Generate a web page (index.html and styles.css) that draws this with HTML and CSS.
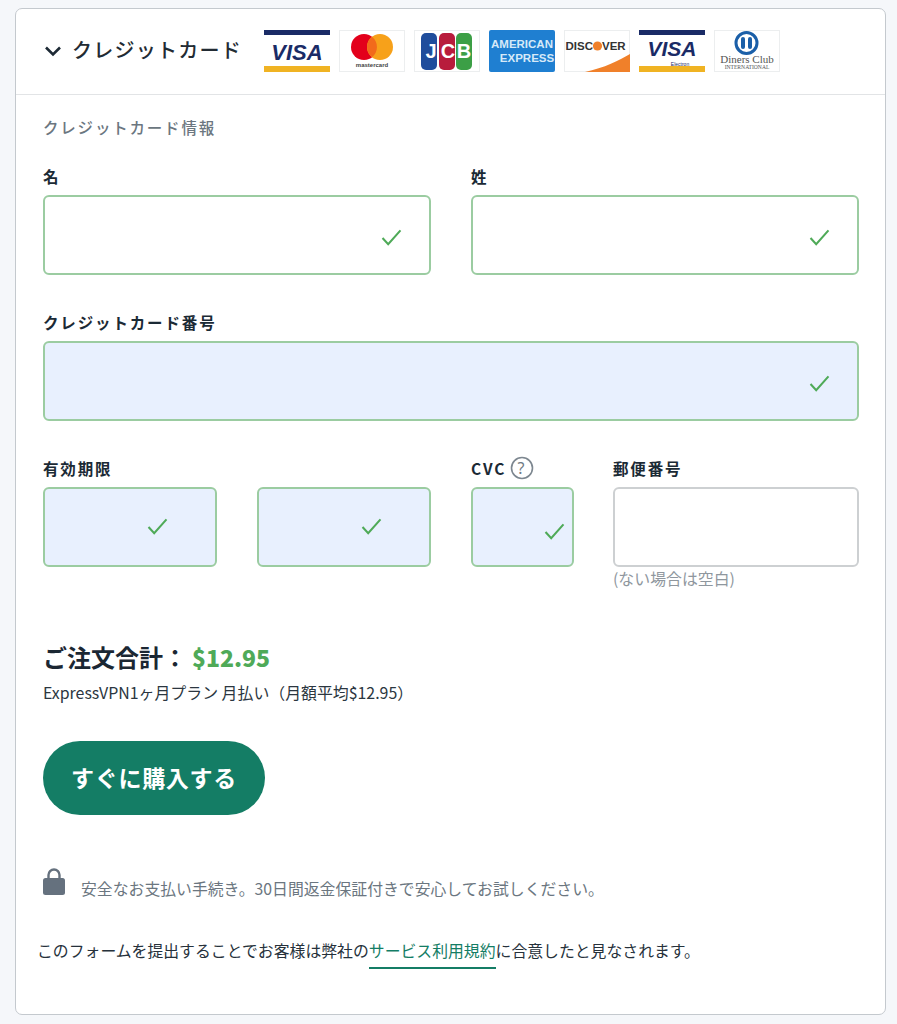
FILE: index.html
```html
<!DOCTYPE html>
<html lang="ja">
<head>
<meta charset="utf-8">
<title>クレジットカード</title>
<link rel="stylesheet" href="styles.css">
</head>
<body>
<main class="card">
  <header class="head">
    <svg class="chev" viewBox="0 0 18 12"><path d="M2 2.5 9 9.5 16 2.5" fill="none" stroke="#1d2a35" stroke-width="2.6"/></svg>
    <h1 class="title">クレジットカード</h1>
    <div class="logos">
      <svg class="logo" viewBox="0 0 66 42"><rect width="66" height="42" fill="#fff"/><rect width="66" height="5" fill="#1a2b66"/><rect y="36" width="66" height="6" fill="#f0b323"/><text x="33" y="29.5" class="t-visa" text-anchor="middle">VISA</text></svg>
      <svg class="logo" viewBox="0 0 66 42"><rect x=".5" y=".5" width="65" height="41" fill="#fff" stroke="#eceeef"/><circle cx="25" cy="17" r="13" fill="#e3001b"/><circle cx="41" cy="17" r="13" fill="#f7a11a"/><path d="M33 6.8a13 13 0 0 1 0 20.4 13 13 0 0 1 0-20.4z" fill="#f26a1b"/><text x="33" y="37" class="t-mc" text-anchor="middle">mastercard</text></svg>
      <svg class="logo" viewBox="0 0 66 42"><rect x=".5" y=".5" width="65" height="41" fill="#fff" stroke="#eceeef"/><rect x="7" y="3" width="16" height="37" rx="5" fill="#1f4d9c"/><rect x="25" y="3" width="16" height="37" rx="5" fill="#b81c3c"/><rect x="42" y="3" width="16" height="37" rx="5" fill="#3c9f46"/><text x="17" y="28" class="t-jcb" text-anchor="middle">J</text><text x="34" y="28" class="t-jcb" text-anchor="middle">C</text><text x="50" y="28" class="t-jcb" text-anchor="middle">B</text></svg>
      <svg class="logo" viewBox="0 0 66 42"><rect width="66" height="42" rx="2" fill="#1f7fd1"/><text x="33" y="18" class="t-amex" text-anchor="middle">AMERICAN</text><text x="38" y="32" class="t-amex" text-anchor="middle">EXPRESS</text></svg>
      <svg class="logo" viewBox="0 0 66 42"><rect x=".5" y=".5" width="65" height="41" fill="#fff" stroke="#eceeef"/><path d="M21 42C40 38 56 30 66 24V42Z" fill="#f0802a"/><text x="29" y="20" class="t-disc" text-anchor="end">DISC</text><circle cx="33.5" cy="16" r="4.6" fill="#f0802a"/><text x="38" y="20" class="t-disc">VER</text></svg>
      <svg class="logo" viewBox="0 0 66 42"><rect width="66" height="42" fill="#fff"/><rect width="66" height="5" fill="#1a2b66"/><rect y="36" width="66" height="6" fill="#f0b323"/><text x="33" y="25.5" class="t-visa-sm" text-anchor="middle">VISA</text><text x="41" y="35.5" class="t-el" text-anchor="middle">Electron</text></svg>
      <svg class="logo" viewBox="0 0 66 42"><rect x=".5" y=".5" width="65" height="41" fill="#fff" stroke="#eceeef"/><circle cx="32.5" cy="13" r="10.5" fill="none" stroke="#1b5fa8" stroke-width="3"/><rect x="27" y="7" width="4" height="12" rx="2" fill="#1b5fa8"/><rect x="34" y="7" width="4" height="12" rx="2" fill="#1b5fa8"/><text x="33" y="33" class="t-dc" text-anchor="middle">Diners Club</text><text x="33" y="39" class="t-int" text-anchor="middle">INTERNATIONAL</text></svg>
    </div>
  </header>

  <form class="body">
    <h2 class="section">クレジットカード情報</h2>

    <div class="row two">
      <div class="field">
        <label class="label">名</label>
        <div class="input"><svg class="check" viewBox="0 0 22 18"><use href="#tick"/></svg></div>
      </div>
      <div class="field">
        <label class="label">姓</label>
        <div class="input"><svg class="check" viewBox="0 0 22 18"><use href="#tick"/></svg></div>
      </div>
    </div>

    <div class="row">
      <div class="field">
        <label class="label">クレジットカード番号</label>
        <div class="input filled"><svg class="check" viewBox="0 0 22 18"><use href="#tick"/></svg></div>
      </div>
    </div>

    <div class="row exp-row">
      <div class="field">
        <label class="label">有効期限</label>
        <div class="exp">
          <div class="input filled inset"><svg class="check" viewBox="0 0 22 18"><use href="#tick"/></svg></div>
          <div class="input filled inset"><svg class="check" viewBox="0 0 22 18"><use href="#tick"/></svg></div>
        </div>
      </div>
      <div class="field">
        <label class="label">CVC
          <svg class="help" viewBox="0 0 24 24"><circle cx="12" cy="12" r="10.5" fill="none" stroke="#7d8790" stroke-width="1.6"/><text x="12" y="17.5" class="t-q" text-anchor="middle">?</text></svg>
        </label>
        <div class="input filled tight"><svg class="check" viewBox="0 0 22 18"><use href="#tick"/></svg></div>
      </div>
      <div class="field zip">
        <label class="label">郵便番号</label>
        <div class="input empty"></div>
        <p class="hint">(ない場合は空白)</p>
      </div>
    </div>

    <div class="total"><span>ご注文合計：</span><strong class="price">$12.95</strong></div>
    <p class="plan">ExpressVPN1ヶ月プラン 月払い（月額平均$12.95）</p>

    <button class="buy" type="button">すぐに購入する</button>

    <div class="secure">
      <svg class="lock" viewBox="0 0 22 28"><path d="M5.5 13V8a5.5 5.5 0 0 1 11 0v5" fill="none" stroke="#65717e" stroke-width="2.4"/><rect y="11" width="22" height="17" rx="2.5" fill="#65717e"/></svg>
      <p class="secure-text">安全なお支払い手続き。30日間返金保証付きで安心してお試しください。</p>
    </div>

    <p class="terms">このフォームを提出することでお客様は弊社の<a class="link" href="#">サービス利用規約</a>に合意したと見なされます。</p>
  </form>
</main>
<svg class="defs" width="0" height="0"><defs><path id="tick" d="M1.5 9.5 7.5 16 20.5 1.5" fill="none" stroke="#4faa58" stroke-width="2.2"/></defs></svg>
</body>
</html>
```

FILE: styles.css
```css
* { box-sizing: border-box; }
html, body { margin: 0; padding: 0; }
body {
  background: #f5f7fa;
  padding: 8px 11px 8px 15px;
  font-family: "Noto Sans CJK JP", "Noto Sans", sans-serif;
  color: #1b2733;
}
.defs { position: absolute; }
.card {
  height: 1007px;
  background: #fff;
  border: 1px solid #c4c9ce;
  border-radius: 7px;
}
.head {
  height: 86px;
  border-bottom: 1px solid #e2e4e6;
  display: flex;
  align-items: center;
  padding: 0 0 2px 28px;
}
.chev { width: 18px; height: 12px; margin-right: 10px; }
.title { margin: -1px 0 0; font-size: 20px; font-weight: 500; letter-spacing: 1.25px; line-height: 1; color: #222b33; white-space: nowrap; }
.logos { display: flex; gap: 9px; margin-left: 22px; }
.logo { width: 66px; height: 42px; display: block; }
.t-visa { font: italic 700 22px "Liberation Sans", sans-serif; fill: #1a2b66; }
.t-visa-sm { font: italic 700 21px "Liberation Sans", sans-serif; fill: #1a2b66; }
.t-mc { font: 700 6px "Liberation Sans", sans-serif; fill: #444; }
.t-jcb { font: 700 20px "Liberation Sans", sans-serif; fill: #fff; }
.t-amex { font: 700 11.5px "Liberation Sans", sans-serif; fill: #d6e9f8; }
.t-disc { font: 700 11.5px "Liberation Sans", sans-serif; fill: #333; }
.t-el { font: 5px "Liberation Sans", sans-serif; fill: #1a2b66; }
.t-dc { font: 11px "Liberation Serif", serif; fill: #555; }
.t-int { font: 5.6px "Liberation Serif", serif; fill: #555; }
.t-q { font: 16px "Noto Sans", sans-serif; fill: #6f7a84; }

.body { padding: 21px 26px 0 27px; }
.section { margin: 0 0 28px; font-size: 15.5px; line-height: 22px; font-weight: 500; letter-spacing: 1.8px; color: #6b7680; }
.row { margin-bottom: 37px; }
.two { display: flex; gap: 40px; }
.two .field { flex: 1; }
.label { display: flex; align-items: center; gap: 4px; height: 22px; margin: -1px 0 8px; font-size: 15.5px; font-weight: 700; letter-spacing: 1.85px; color: #1b2a35; }
.input {
  height: 80px;
  border: 2px solid #9bcca1;
  border-radius: 6px;
  background: #fff;
  display: flex;
  align-items: center;
  justify-content: flex-end;
  padding: 4px 27px 0 0;
}
.filled { background: #e8f0fe; }
.empty { border-color: #cdd0d2; }
.inset { padding: 0 47px 2px 0; }
.tight { padding: 8px 7px 0 0; }
.check { width: 21px; height: 17px; }
.help { width: 24px; height: 24px; }

.exp-row { display: grid; grid-template-columns: 388px 103px 1fr; column-gap: 40px; margin-bottom: 50px; }
.exp { display: grid; grid-template-columns: 174px 174px; gap: 40px; }
.zip { margin-left: -1px; }
.hint { margin: 2px 0 0; font-size: 15.9px; line-height: 20px; color: #8f979e; }

.total { display: flex; align-items: center; font-size: 24px; font-weight: 700; line-height: 36px; color: #1b2733; }
.price { color: #4faa58; font-size: 23px; margin-left: 5px; }
.plan { margin: 7px 0 0; font-size: 15.9px; line-height: 22px; color: #2b3640; }
.buy {
  display: block;
  margin-top: 37px;
  width: 222px;
  height: 74px;
  border: 0;
  border-radius: 37px;
  background: #147d65;
  color: #fff;
  font: 700 23px "Noto Sans CJK JP", sans-serif;
  letter-spacing: .7px;
  padding: 0 0 2px;
}
.secure { display: flex; align-items: flex-start; margin-top: 52px; }
.lock { width: 22px; height: 28px; margin-right: 16px; flex: none; }
.secure-text { margin: 11px 0 0; font-size: 15.85px; line-height: 22px; color: #6b7680; }
.terms { margin: 40px 0 0 -6px; font-size: 15.85px; line-height: 22px; color: #26313b; }
.link { color: #147d65; text-decoration: none; padding-bottom: 5px; border-bottom: 2px solid #147d65; }
```
